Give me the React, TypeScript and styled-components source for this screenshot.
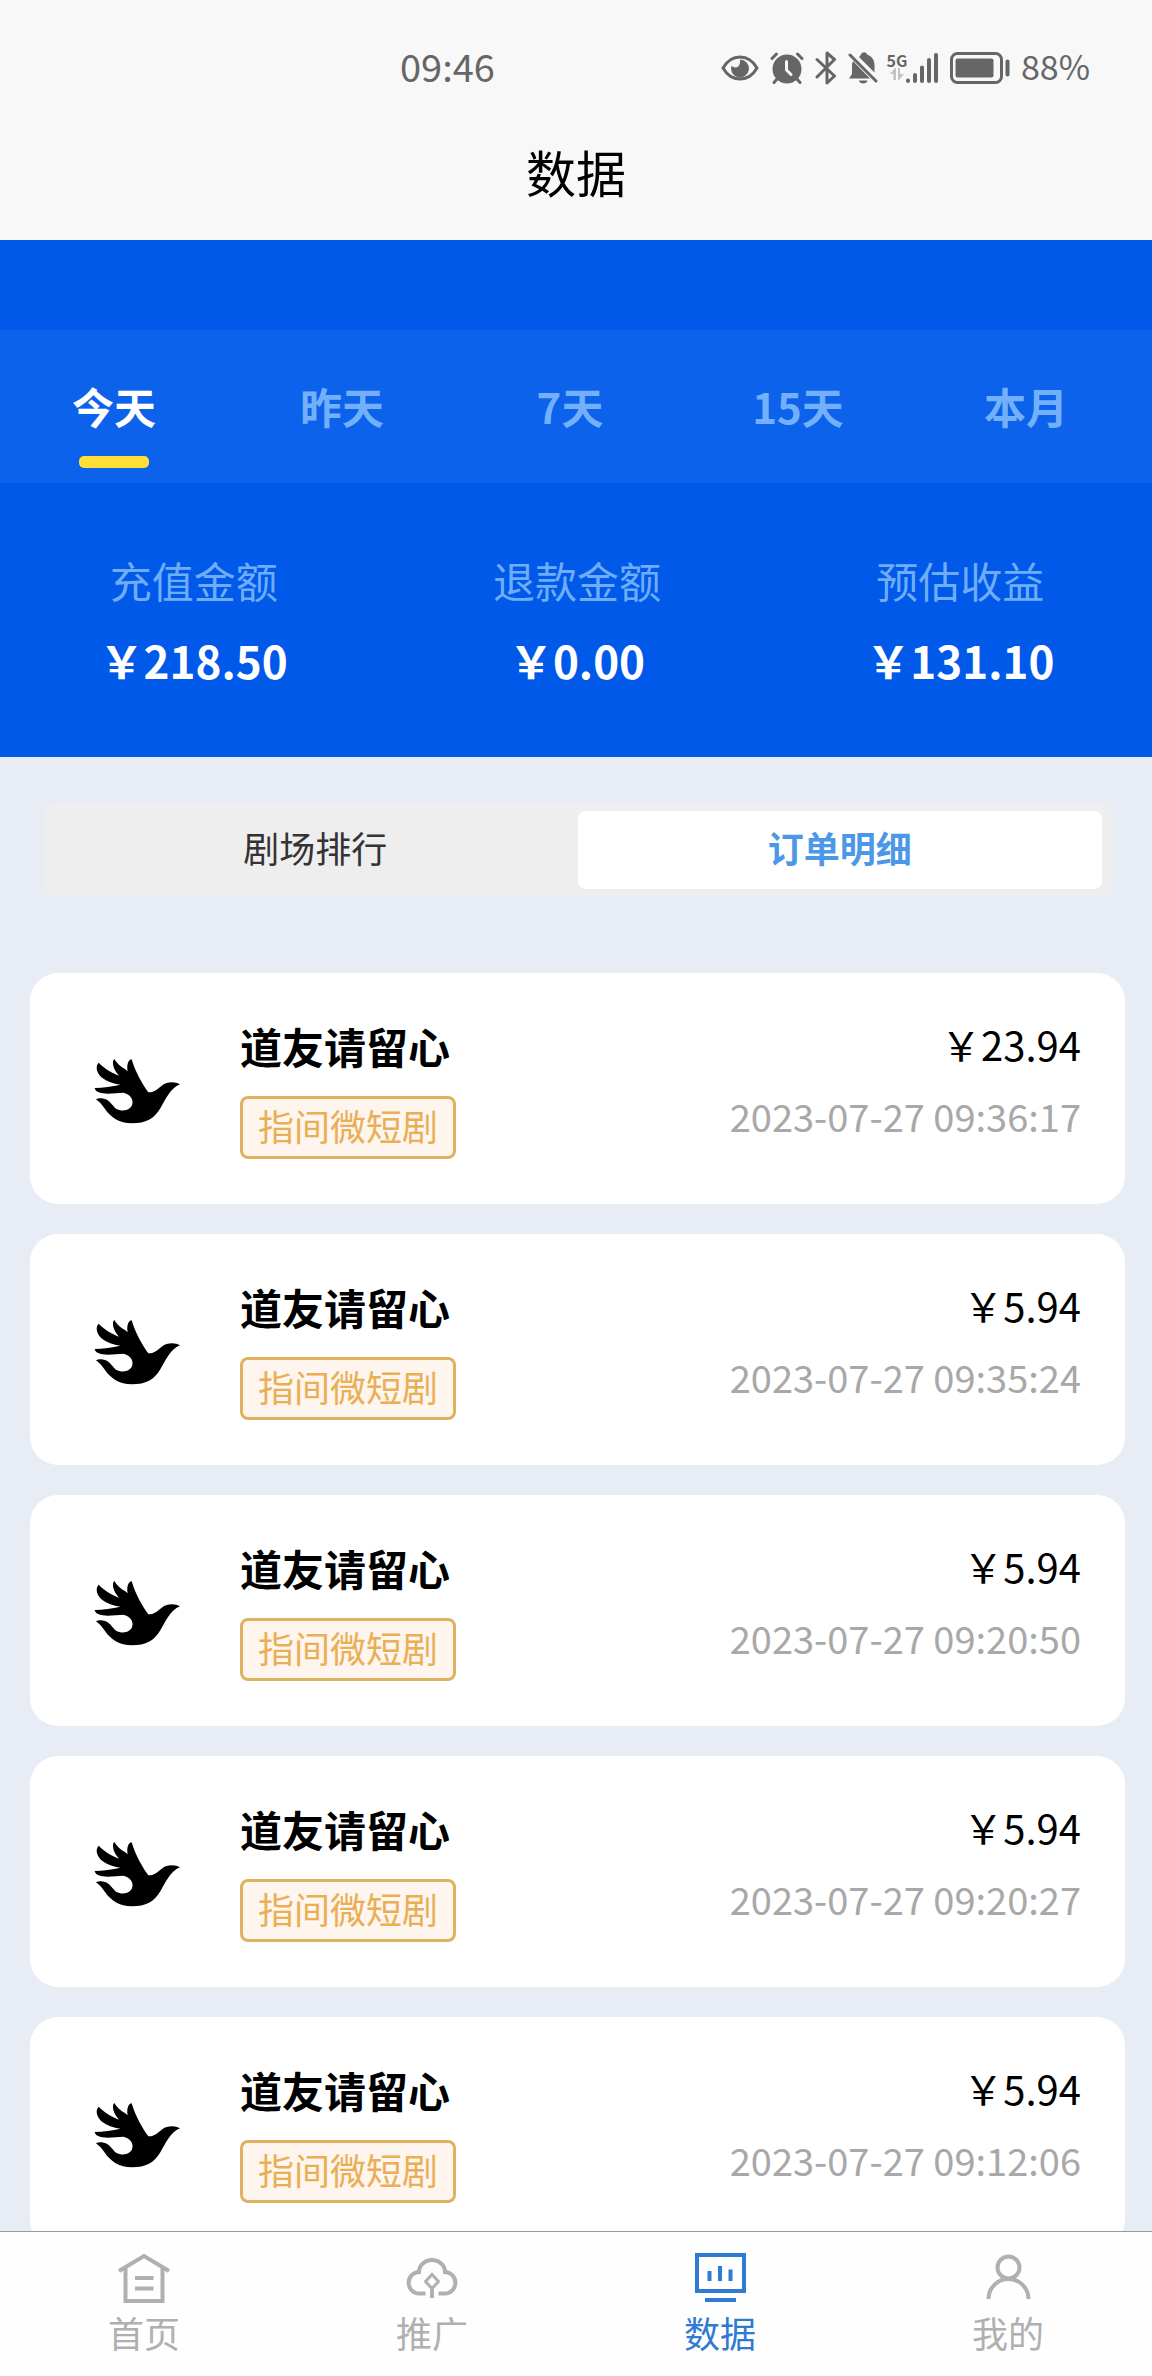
import React, { useState } from "react";
import styled, { createGlobalStyle } from "styled-components";

const GlobalStyle = createGlobalStyle`
  * { box-sizing: border-box; }
  body {
    margin: 0;
    background: #e8ecf5;
    font-family: "Noto Sans CJK SC", "Noto Sans", sans-serif;
  }
  button { border: 0; margin: 0; padding: 0; background: none; font: inherit; color: inherit; cursor: pointer; }
  h1, h2, p, dl, dt, dd, ul { margin: 0; padding: 0; font-weight: 400; }
`;

const Screen = styled.div`
  display: flex;
  flex-direction: column;
  height: 100vh;
`;

const Header = styled.header`
  flex: none;
  padding-bottom: 30px;
  background: #f8f8f8;
`;

const StatusBar = styled.div`
  display: flex;
  align-items: center;
  justify-content: space-between;
  height: 132px;
  padding: 0 62px 0 400px;
  color: #666;
`;

const Clock = styled.time`
  font-size: 38px;
  line-height: 50px;
`;

const StatusIcons = styled.div`
  display: flex;
  align-items: center;
  gap: 11px;
`;

const Glyph = styled.svg`
  display: block;
  flex: none;
  margin-top: 3px;
`;

const Network = styled.div`
  display: flex;
  align-items: center;
`;

const NetworkType = styled.span`
  display: flex;
  flex-direction: column;
  align-items: center;
  width: 16px;
  font: 700 16px/16px "Liberation Sans Narrow", "Noto Sans CJK SC", sans-serif;
`;

const BatteryText = styled.span`
  font-size: 34px;
  line-height: 50px;
`;

const PageTitle = styled.h1`
  font-size: 50px;
  line-height: 78px;
  text-align: center;
  color: #000;
`;

const Content = styled.main`
  flex: 1;
  min-height: 0;
  overflow-y: auto;
  scrollbar-width: none;
`;

const Hero = styled.section`
  padding-top: 90px;
  background: #0059e8;
`;

const RangeTabs = styled.div`
  display: grid;
  grid-template-columns: repeat(5, 1fr);
  padding: 51px 12px 15px 0;
  background: #0c62ea;
`;

const RangeTab = styled.button<{ $active: boolean }>`
  display: flex;
  flex-direction: column;
  align-items: center;
  gap: 25px;
  font-size: 42px;
  line-height: 50px;
  font-weight: 700;
  color: ${(p) => (p.$active ? "#fff" : "#73b0fb")};

  &::after {
    content: "";
    width: 70px;
    height: 12px;
    border-radius: 5px;
    background: ${(p) => (p.$active ? "#ffdf38" : "transparent")};
  }
`;

const Stats = styled.dl`
  display: grid;
  grid-template-columns: repeat(3, 1fr);
  padding: 67px 0 67px 2px;
  text-align: center;
`;

const Stat = styled.div`
  display: flex;
  flex-direction: column;
  gap: 20px;
  line-height: 60px;
`;

const StatLabel = styled.dt`
  font-size: 42px;
  color: #6fadfb;
`;

const StatValue = styled.dd`
  font-size: 44px;
  font-weight: 700;
  color: #fff;
`;

const Segments = styled.div`
  display: grid;
  grid-template-columns: 1fr 1fr;
  margin: 46px 40px 76px 44px;
  padding: 8px 10px 8px 9px;
  border-radius: 10px;
  background: #eee;
`;

const Segment = styled.button<{ $active: boolean }>`
  height: 78px;
  padding-bottom: 6px;
  border-radius: 8px;
  font-size: 36px;
  font-weight: ${(p) => (p.$active ? 700 : 400)};
  color: ${(p) => (p.$active ? "#4b98e6" : "#333")};
  background: ${(p) => (p.$active ? "#fff" : "transparent")};
`;

const OrderList = styled.ul`
  display: flex;
  flex-direction: column;
  gap: 30px;
  padding: 0 27px 30px 30px;
  list-style: none;
`;

const OrderCard = styled.li`
  display: flex;
  align-items: flex-start;
  gap: 50px;
  padding: 45px 44px 45px 50px;
  border-radius: 28px;
  background: #fff;
`;

const Logo = styled.svg`
  flex: none;
  align-self: center;
`;

const OrderInfo = styled.div`
  display: flex;
  flex: 1;
  flex-direction: column;
  align-items: flex-start;
  gap: 22px;
`;

const OrderName = styled.h2`
  font-size: 42px;
  line-height: 56px;
  font-weight: 700;
  color: #000;
`;

const Tag = styled.span`
  padding: 1px 15px 5px;
  border: 3px solid #deb260;
  border-radius: 8px;
  background: #fdf5ee;
  font-size: 36px;
  line-height: 51px;
  color: #eaaf55;
`;

const OrderMeta = styled.div`
  display: flex;
  flex-direction: column;
  align-items: flex-end;
  gap: 20px;
  line-height: 52px;
`;

const Price = styled.p`
  font-size: 40px;
  color: #000;
`;

const OrderTime = styled.time`
  font-size: 38px;
  color: #a8a8a8;
`;

const BottomNav = styled.nav`
  flex: none;
  display: grid;
  grid-template-columns: repeat(4, 1fr);
  border-top: 1px solid #9698a3;
  background: #fefefe;
`;

const NavLink = styled.a<{ $active?: boolean }>`
  display: flex;
  flex-direction: column;
  align-items: center;
  padding: 18px 0 22px;
  font-size: 36px;
  line-height: 44px;
  text-decoration: none;
  color: ${(p) => (p.$active ? "#2f7ad2" : "#b0b0b0")};
`;

const NavIcon = styled.svg`
  display: block;
  width: 60px;
  height: 60px;
  fill: none;
  stroke: currentColor;
  stroke-width: 4;
`;

function EyeIcon() {
  return (
    <Glyph width="38" height="26" viewBox="0 0 38 26" fill="none" stroke="currentColor" strokeWidth="3">
      <path d="M2 13C6 6 12 2 19 2s13 4 17 11c-4 7-10 11-17 11S6 20 2 13Z" />
      <path d="M19 4.500a9 9 0 1 1-8.500 6c2 2.500 6 2.500 7.500 0 1.200-2 1-4 1-6Z" fill="currentColor" stroke="none" />
    </Glyph>
  );
}

function AlarmIcon() {
  return (
    <Glyph width="34" height="32" viewBox="0 0 34 32" fill="none" stroke="currentColor" strokeWidth="3" strokeLinecap="round">
      <circle cx="17" cy="17" r="14.500" fill="currentColor" stroke="none" />
      <path d="M2 6.500 6.500 2M32 6.500 27.500 2M7 27l-3 3.500M27 27l3 3.500" />
      <path d="M16.500 9.500V18l4.500 4.500" stroke="#f8f8f8" />
    </Glyph>
  );
}

function BluetoothIcon() {
  return (
    <Glyph width="22" height="34" viewBox="0 0 22 34" fill="none" stroke="currentColor" strokeWidth="3" strokeLinejoin="round" strokeLinecap="round">
      <path d="M2 8.500 19.500 25 12 32V2l7.500 6.500L2 26" />
    </Glyph>
  );
}

function MutedBellIcon() {
  return (
    <Glyph width="30" height="32" viewBox="0 0 30 32" fill="currentColor">
      <path d="M5 9 22 26.500H1l3-4.500V14c0-1.800.300-3.500 1-5Z" />
      <path d="M11 5C12 4 12.500 3 13 2.500c1-3 5.500-3 6 0C24 4 26.500 8.500 26.500 13v7.500L11 5Z" />
      <path d="M11 28.500h8.500c-.500 4-8 4-8.500 0Z" />
      <path d="M2 3 28 29" stroke="currentColor" strokeWidth="3" strokeLinecap="round" />
    </Glyph>
  );
}

function TrafficIcon() {
  return (
    <svg width="14" height="12" viewBox="0 0 14 12" fill="#c2c2c2">
      <path d="M0 6 5 0h1v12H3.500V6H0ZM8 0h2v6h4l-5 6H8V0Z" />
    </svg>
  );
}

function SignalIcon() {
  return (
    <Glyph width="34" height="32" viewBox="0 0 34 32" fill="none" stroke="currentColor" strokeWidth="4" strokeLinecap="round">
      <path d="M3 28.500v.500M10 23v6M17 15.500V29M24 8v21M31 3v26" />
    </Glyph>
  );
}

function BatteryIcon() {
  return (
    <Glyph width="60" height="32" viewBox="0 0 60 32" fill="none" stroke="currentColor">
      <rect x="1.500" y="1.500" width="50" height="29" rx="6" strokeWidth="3" />
      <rect x="5.500" y="6.500" width="38" height="19" rx="2" fill="currentColor" stroke="none" />
      <path d="M57.500 9.500v13" strokeWidth="4" strokeLinecap="round" />
    </Glyph>
  );
}

function DoveLogo() {
  return (
    <Logo width="110" height="110" viewBox="0 -18 330 330" aria-hidden="true">
      <path
        fill="#000"
        d="M300 133C286 125 262 124 245 137C232 148 219 158 205 157C188 134 166 96 155 58C146 58 139 74 143 94L136 88C122 80 110 70 103 57C95 64 98 86 117 107C98 99 74 87 56 68C45 78 50 100 66 113C80 124 100 131 121 134C98 140 68 143 44 144C45 152 54 158 68 160C90 163 112 158 130 158C151 162 160 178 157 192C153 210 129 217 108 206C95 196 88 176 64 175C57 175 52 176 48 178C58 185 66 194 75 207C91 231 118 250 156 250C198 250 222 237 241 205C257 178 270 145 300 133Z"
      />
    </Logo>
  );
}

function HomeIcon() {
  return (
    <NavIcon viewBox="0 0 60 60">
      <path d="M5 21 30 6l25 15M11.500 18v33h37V18M21 28h18.500M21 38.500h18.500" />
    </NavIcon>
  );
}

function PromoteIcon() {
  return (
    <NavIcon viewBox="0 0 60 60">
      <path d="M23.500 43.500H16A10.800 10.800 0 0 1 17 22A13 12 0 0 1 43 22A10.800 10.800 0 0 1 44 43.500H36.500M30 38v10" />
      <path d="m30 24.500 6.500 7-6.500 7-6.500-7Z" strokeWidth="3" />
    </NavIcon>
  );
}

function DataIcon() {
  return (
    <NavIcon viewBox="0 0 60 60">
      <path d="M7 5h47v36H7ZM19.500 21v10M30 16v15M40.500 19.500V31M15 50h31" />
    </NavIcon>
  );
}

function UserIcon() {
  return (
    <NavIcon viewBox="0 0 60 60">
      <circle cx="30.500" cy="17.500" r="11" />
      <path d="M10.500 49a20 20 0 0 1 40 0" />
    </NavIcon>
  );
}

const ranges = ["今天", "昨天", "7天", "15天", "本月"];
const segments = ["剧场排行", "订单明细"];

const stats = [
  { label: "充值金额", value: "¥218.50" },
  { label: "退款金额", value: "¥0.00" },
  { label: "预估收益", value: "¥131.10" },
];

const orders = [
  { price: "¥23.94", time: "2023-07-27 09:36:17" },
  { price: "¥5.94", time: "2023-07-27 09:35:24" },
  { price: "¥5.94", time: "2023-07-27 09:20:50" },
  { price: "¥5.94", time: "2023-07-27 09:20:27" },
  { price: "¥5.94", time: "2023-07-27 09:12:06" },
];

// Amounts are shown with the full-width yen sign.
const fullWidthYen = (amount: string) => amount.replace("\u00A5", "\uFFE5");

const navItems = [
  { label: "首页", Icon: HomeIcon },
  { label: "推广", Icon: PromoteIcon },
  { label: "数据", Icon: DataIcon },
  { label: "我的", Icon: UserIcon },
];

export default function App() {
  const [range, setRange] = useState(0);
  const [segment, setSegment] = useState(1);

  return (
    <Screen>
      <GlobalStyle />
      <Header>
        <StatusBar>
          <Clock>09:46</Clock>
          <StatusIcons>
            <EyeIcon />
            <AlarmIcon />
            <BluetoothIcon />
            <MutedBellIcon />
            <Network>
              <NetworkType>
                5G
                <TrafficIcon />
              </NetworkType>
              <SignalIcon />
            </Network>
            <BatteryIcon />
            <BatteryText>88%</BatteryText>
          </StatusIcons>
        </StatusBar>
        <PageTitle>数据</PageTitle>
      </Header>

      <Content>
        <Hero>
          <RangeTabs>
            {ranges.map((label, i) => (
              <RangeTab key={label} type="button" $active={i === range} onClick={() => setRange(i)}>
                {label}
              </RangeTab>
            ))}
          </RangeTabs>
          <Stats>
            {stats.map((s) => (
              <Stat key={s.label}>
                <StatLabel>{s.label}</StatLabel>
                <StatValue>{fullWidthYen(s.value)}</StatValue>
              </Stat>
            ))}
          </Stats>
        </Hero>

        <Segments>
          {segments.map((label, i) => (
            <Segment key={label} type="button" $active={i === segment} onClick={() => setSegment(i)}>
              {label}
            </Segment>
          ))}
        </Segments>

        <OrderList>
          {orders.map((o) => (
            <OrderCard key={o.time}>
              <DoveLogo />
              <OrderInfo>
                <OrderName>道友请留心</OrderName>
                <Tag>指间微短剧</Tag>
              </OrderInfo>
              <OrderMeta>
                <Price>{fullWidthYen(o.price)}</Price>
                <OrderTime>{o.time}</OrderTime>
              </OrderMeta>
            </OrderCard>
          ))}
        </OrderList>
      </Content>

      <BottomNav>
        {navItems.map(({ label, Icon }) => (
          <NavLink key={label} href="#" $active={label === "数据"}>
            <Icon />
            {label}
          </NavLink>
        ))}
      </BottomNav>
    </Screen>
  );
}
